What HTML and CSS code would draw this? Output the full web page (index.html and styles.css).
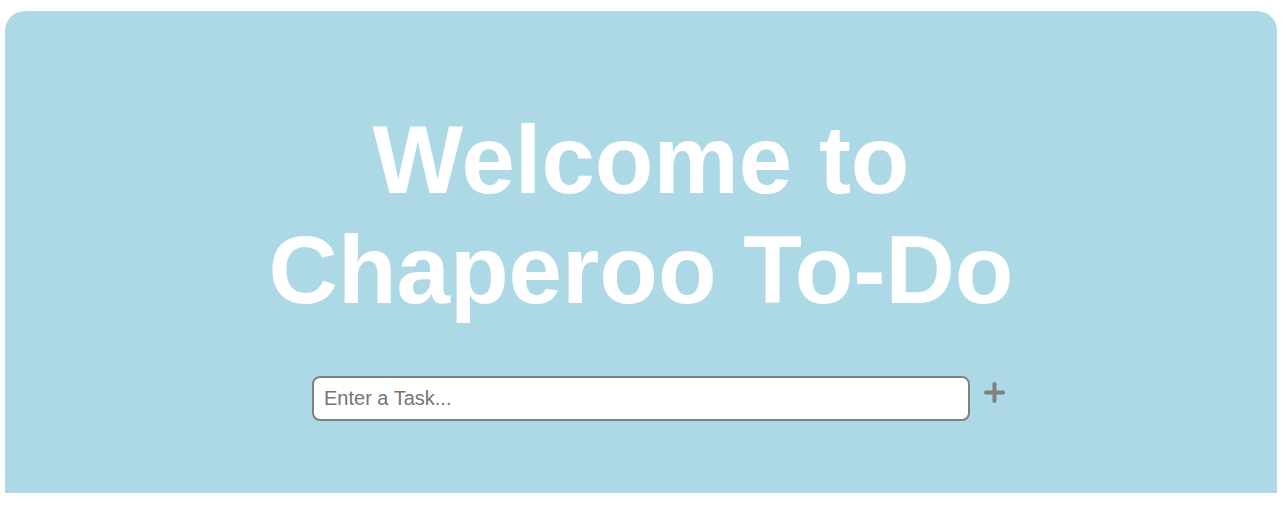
FILE: index.html
```html
<!DOCTYPE html>
<html lang="en">
<head>
<meta charset="utf-8">
<title>Chaperoo To-Do</title>
<link rel="stylesheet" href="styles.css">
</head>
<body>
<main class="panel">
  <h1 class="title">Welcome to<br>Chaperoo To-Do</h1>
  <form class="task-row" onsubmit="return false;">
    <span class="spacer"></span>
    <input class="task-input" type="text" placeholder="Enter a Task...">
    <button class="add-btn" type="submit" aria-label="Add task">
      <svg width="21" height="21" viewBox="0 0 21 21"><path d="M10.5 2v17M2 10.5h17" stroke="#808080" stroke-width="4" stroke-linecap="round" fill="none"/></svg>
    </button>
  </form>
</main>
</body>
</html>
```

FILE: styles.css
```css
html, body {
  margin: 0;
  padding: 0;
  background: #ffffff;
}
body {
  font-family: "Liberation Sans", Arial, sans-serif;
}
.panel {
  margin: 11px 11px 0 5px;
  height: 482px;
  box-sizing: border-box;
  background: #add8e6;
  border-radius: 20px 20px 0 0;
  padding-top: 94px;
}
.title {
  margin: 0;
  text-align: center;
  color: #ffffff;
  font-size: 96px;
  font-weight: 700;
  line-height: 110px;
}
.task-row {
  margin-top: 51px;
  display: grid;
  grid-template-columns: 1fr 658px 1fr;
  align-items: start;
}
.task-input {
  box-sizing: border-box;
  width: 658px;
  height: 45px;
  border: 2px solid #808080;
  border-radius: 8px;
  padding: 0 10px;
  font-family: "Liberation Sans", Arial, sans-serif;
  font-size: 20px;
  color: #333;
  background: #fff;
  outline: none;
}
.task-input::placeholder {
  color: #757575;
}
.add-btn {
  justify-self: start;
  margin: 6px 0 0 14px;
  padding: 0;
  border: none;
  background: transparent;
  width: 21px;
  height: 21px;
  display: flex;
  cursor: pointer;
}
```
